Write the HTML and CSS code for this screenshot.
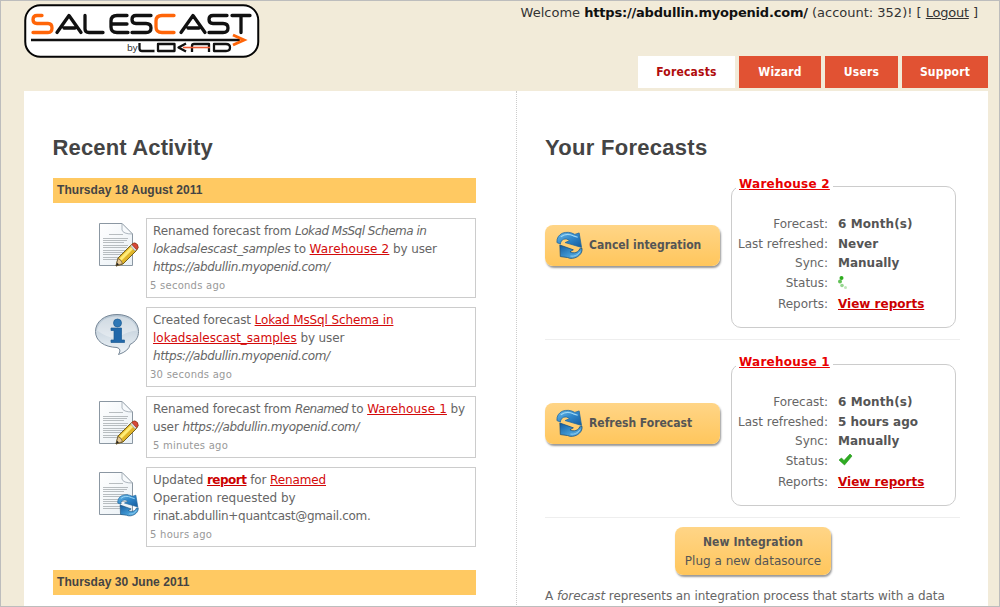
FILE: index.html
```html
<!DOCTYPE html>
<html lang="en">
<head>
<meta charset="utf-8">
<title>Salescast</title>
<link rel="stylesheet" href="styles.css">
</head>
<body>
<svg class="defs" width="0" height="0" aria-hidden="true">
  <defs>
    <linearGradient id="paper" x1="0" y1="0" x2="1" y2="1"><stop offset="0" stop-color="#fff"/><stop offset="1" stop-color="#e9f0f5"/></linearGradient>
    <linearGradient id="blue" x1="0" y1="0" x2="1" y2="1"><stop offset="0" stop-color="#6dbbe8"/><stop offset=".5" stop-color="#2f86c9"/><stop offset="1" stop-color="#155a9c"/></linearGradient>
    <linearGradient id="blue-low" x1="0" y1="0" x2="1" y2="1"><stop offset="0" stop-color="#155a9c"/><stop offset=".55" stop-color="#3d94d0"/><stop offset="1" stop-color="#6dbbe8"/></linearGradient>
    <linearGradient id="bubble" x1="0" y1="0" x2="0" y2="1"><stop offset="0" stop-color="#b3c3d1"/><stop offset="1" stop-color="#f0f5f9"/></linearGradient>
    <symbol id="page" viewBox="0 0 44 48">
      <path d="M5.500 2.500H28L38.500 13V44.500H5.500Z" fill="url(#paper)" stroke="#8b97a2"/>
      <path d="M28 2.500V9Q29 13 38.500 13Z" fill="#f7fafc" stroke="#9aa5ae" stroke-width=".8"/>
      <path d="M15 13.500H29M9 17.500H34M9 19.500H33M9 21.500H30M9 24.500H34M9 26.500H33M9 29.500H31M9 31.500H33M9 33.500H28M9 36.500H30M9 38.500H26" stroke="#b0b5b9" stroke-width=".9"/>
    </symbol>
    <symbol id="sync" viewBox="0 0 28 30">
      <path d="M1 12.500C0 3 11-1 19.500 4L24 2.500 26.500 17.500 9.500 12.500 14 10.500C10 7 5 9 4.500 14Z" fill="url(#blue)" stroke="#1f659c" stroke-width=".8"/>
      <path d="M27 18.500C28 26 18 31 12 28L4.500 27 4 15 18 20 14.500 22C18 24.500 24 22.500 24.500 19Z" fill="url(#blue-low)" stroke="#174f7d" stroke-width=".8"/>
      <path d="M5 6.500Q11 2 18 5.500L22.500 7" fill="none" stroke="#9ed8f5" stroke-width="1.200"/>
      <path d="M15 26.500Q21 27.500 25 22" fill="none" stroke="#8fcdf0"/>
    </symbol>
    <symbol id="pencil" viewBox="0 0 24 25">
      <path d="M1 24 3 16 16.500 2.500Q20-.5 22.500 3 24 6 21.500 8.500L8 22Z" fill="#e0b52a" stroke="#76601b"/>
      <path d="M5.500 17.500 18 5" stroke="#ffec78" stroke-width="3"/>
      <path d="M1 24 3 16.500Q6.500 18 7.500 21.500Z" fill="#e9cb98" stroke="#665337" stroke-width=".7"/>
      <path d="M1 24 2 20.800 4 22.500Z" fill="#222"/>
      <path d="M15.500 4 17 2.500 21.500 7.500 20 9Z" fill="#d8dcdf" stroke="#8c8f91" stroke-width=".5"/>
      <path d="M17 2.500Q20-.5 22.500 3 24 6 21.500 7.500Z" fill="#d94938" stroke="#9c3026" stroke-width=".7"/>
    </symbol>
  </defs>
</svg>
<div class="window">
  <header class="header">
    <svg class="logo" viewBox="0 0 236 54" role="img" aria-label="Salescast by Lokad">
      <rect x="1.250" y="1.250" width="233" height="51.500" rx="15" fill="#fff" stroke="#050505" stroke-width="2"/>
      <g fill="none" stroke="#111" stroke-width="3.300" stroke-linecap="round" stroke-linejoin="round">
        <path stroke="#ff6508" d="M18 11.500H13Q9 11.500 9 15.500T13 19.500H24Q28 19.500 28 24T24 28.500H9"/>
        <path d="M33 28.500 45 11.500 57 28.500M40 24H51M61 11.500V25Q61 28.500 65 28.500H79M103 11.500H93Q87 11.500 87 17V23Q87 28.500 93 28.500H104M87 20H103M127 11.500H112Q108 11.500 108 15.500T112 19.500H122Q127 19.500 127 24T122 28.500H108"/>
        <path stroke="#ff6508" d="M150 11.500H138Q132 11.500 132 17V23Q132 28.500 138 28.500H150"/>
        <path d="M157 28.500 169 11.500 181 28.500M164 24H175M203 11.500H189Q185 11.500 185 15.500T189 19.500H199Q204 19.500 204 24T199 28.500H185M208 11.500H226M217 11.500V28.500"/>
      </g>
      <path d="M7 36H216" stroke="#111" stroke-width="2.500"/>
      <path d="M209 31 220 36 209 41" fill="none" stroke="#ff6508" stroke-width="3"/>
      <text x="103" y="46.500" class="logo-by">by</text>
      <g fill="none" stroke="#111" stroke-width="2.300" stroke-linejoin="round">
        <path d="M115.500 39V44.500Q115.500 47 118 47H130.500M134 40H150.500V47H134ZM162 39.500 154.500 43.500 162 47.500M168 48V42Q168 40 170 40H185V48M190 40H202Q206 40 206 43.500T202 47H190Z"/>
        <path d="M159 43.500H186" stroke="#f25c35" stroke-width="1.600"/>
      </g>
    </svg>
    <div class="header-right">
      <p class="welcome">Welcome <strong>https://abdullin.myopenid.com/</strong> (account: 352)! [ <a href="#">Logout</a> ]</p>
      <nav class="tabs"><a class="tab tab-active" href="#">Forecasts</a><a class="tab tab-wizard" href="#">Wizard</a><a class="tab tab-users" href="#">Users</a><a class="tab tab-support" href="#">Support</a></nav>
    </div>
  </header>
  <main class="content">
    <section class="activity">
      <h1>Recent Activity</h1>
      <h2>Thursday 18 August 2011</h2>
      <div class="feed">
        <article class="event">
          <svg class="event-icon" viewBox="0 0 46 48"><use href="#page" width="44" height="48"/><use href="#pencil" x="21" y="21" width="24" height="25"/></svg>
          <div class="event-box"><p>Renamed forecast from <em class="source">Lokad MsSql Schema in</em><br><em class="sample">lokadsalescast_samples</em> to <a class="warehouse" href="#">Warehouse 2</a> by user<br><em>https://abdullin.myopenid.com/</em></p><time>5 seconds ago</time></div>
        </article>
        <article class="event">
          <svg class="event-icon" viewBox="0 0 46 48">
            <path d="M23 4.500C10 4.500 1.500 12 1.500 21.500 1.500 31 10 37 23 37.500Q28 39 24.500 44.500 35 41 36 34.500C42 31.500 44.500 27 44.500 21.500 44.500 12 36 4.500 23 4.500Z" fill="url(#bubble)" stroke="#778797"/>
            <path d="M3 20.500Q6 6.500 23 6.500T43 20.500Q33 21.500 26 26.500T3 20.500Z" fill="#fff" opacity=".35"/>
            <circle cx="23.500" cy="13" r="4" fill="#2d77b6" stroke="#1c5b94" stroke-width=".7"/>
            <path d="M17 18H27.500V30H30.500V32.500H17V30H20V20.500H17Z" fill="#2168aa" stroke="#1c5b94" stroke-width=".7"/>
          </svg>
          <div class="event-box"><p>Created forecast <a href="#">Lokad MsSql Schema in<br><span class="sample-link">lokadsalescast_samples</span></a> by user<br><em>https://abdullin.myopenid.com/</em></p><time>30 seconds ago</time></div>
        </article>
        <article class="event event-short">
          <svg class="event-icon" viewBox="0 0 46 48"><use href="#page" width="44" height="48"/><use href="#pencil" x="21" y="21" width="24" height="25"/></svg>
          <div class="event-box"><p>Renamed forecast from <em class="old-name">Renamed</em> to <a class="warehouse" href="#">Warehouse 1</a> by<br>user <em>https://abdullin.myopenid.com/</em></p><time class="time-indent">5 minutes ago</time></div>
        </article>
        <article class="event">
          <svg class="event-icon" viewBox="0 0 46 48"><use href="#page" width="44" height="48"/><use href="#sync" x="23" y="23" width="22" height="24"/></svg>
          <div class="event-box"><p>Updated <a class="strong" href="#">report</a> for <a href="#">Renamed</a><br><span class="operation">Operation requested by</span><br><span class="email">rinat.abdullin+quantcast@gmail.com.</span></p><time>5 hours ago</time></div>
        </article>
      </div>
      <h2>Thursday 30 June 2011</h2>
      <div class="feed feed-next"><div class="event-box"></div></div>
    </section>
    <section class="forecasts">
      <h1>Your Forecasts</h1>
      <article class="forecast">
        <button class="button action"><svg class="button-icon"><use href="#sync"/></svg><span>Cancel integration</span></button>
        <fieldset>
          <legend><a href="#">Warehouse 2</a></legend>
          <dl>
            <dt>Forecast:</dt><dd class="period">6 Month(s)</dd>
            <dt>Last refreshed:</dt><dd>Never</dd>
            <dt>Sync:</dt><dd>Manually</dd>
            <dt>Status:</dt><dd><svg class="status" viewBox="0 0 16 16"><g fill="#2eac1f"><circle cx="3.500" cy="3" r="2"/><circle cx="2" cy="6.500" r="2" opacity=".75"/><circle cx="4" cy="10.500" r="1.800" opacity=".5"/><circle cx="7.500" cy="12.500" r="1.500" opacity=".3"/></g></svg></dd>
            <dt>Reports:</dt><dd><a href="#">View reports</a></dd>
          </dl>
        </fieldset>
      </article>
      <article class="forecast">
        <button class="button action"><svg class="button-icon"><use href="#sync"/></svg><span>Refresh Forecast</span></button>
        <fieldset>
          <legend><a href="#">Warehouse 1</a></legend>
          <dl>
            <dt>Forecast:</dt><dd class="period">6 Month(s)</dd>
            <dt>Last refreshed:</dt><dd>5 hours ago</dd>
            <dt>Sync:</dt><dd>Manually</dd>
            <dt>Status:</dt><dd><svg class="status" viewBox="0 0 16 16"><path d="M1 7 3.500 5 6 7.500 12 1 14 3 6.500 12Z" fill="#2eac22" stroke="#239418" stroke-width=".6"/></svg></dd>
            <dt>Reports:</dt><dd><a href="#">View reports</a></dd>
          </dl>
        </fieldset>
      </article>
      <button class="button new-integration"><strong>New Integration</strong><span>Plug a new datasource</span></button>
      <p class="intro">A <em>forecast</em> represents an integration process that starts with a data</p>
    </section>
  </main>
</div>
</body>
</html>
```
FILE: styles.css
```css
* { box-sizing: border-box; }
body { margin: 0; font-family: Verdana, "DejaVu Sans", sans-serif; font-size: 12px; color: #666; }
.defs { display: block; position: absolute; }
.window { height: 607px; overflow: hidden; border: 1px solid #bdbdbd; background: #f2ebd9; padding: 0 11px 0 23px; }
.header { height: 90px; display: flex; justify-content: space-between; }
.logo { width: 236px; height: 54px; margin-top: 3px; }
.logo-by { font: 9.500px "Open Sans", sans-serif; fill: #222; }
.header-right { display: flex; flex-direction: column; align-items: flex-end; }
.welcome { margin: 4px 10px 0 0; font-size: 13px; letter-spacing: 0; line-height: 16px; color: #333; white-space: nowrap; }
.welcome strong { color: #111; letter-spacing: -.2px; }
.welcome a { color: #333; letter-spacing: -.25px; }
.tabs { margin-top: 35px; display: flex; gap: 4px; }
.tab { height: 32px; width: 97px; line-height: 33px; text-align: center; background: #e15233; color: #fff; font-family: "DejaVu Sans Condensed", "DejaVu Sans", sans-serif; font-stretch: condensed; letter-spacing: .2px; font-weight: bold; text-decoration: none; }
.tab-active { background: #fff; color: #b00c0c; }
.tab-wizard { width: 82px; }
.tab-users { width: 73px; }
.tab-support { width: 86px; }
.content { height: 530px; background: #fff; display: grid; grid-template-columns: 493px 1fr; }
.activity { padding: 0 40px 0 28.500px; border-right: 1px dotted #ccc; }
h1 { margin: 43px 0 17px; font: bold 22px/27px "Liberation Sans", Arial, sans-serif; letter-spacing: .15px; color: #444; }
h2 { margin: 0; height: 25px; padding-left: 4.500px; background: #ffc962; font: bold 12px/25px "Liberation Sans", Arial, sans-serif; letter-spacing: .05px; color: #444; }
.feed { padding: 15px 0 23px 41.500px; display: flex; flex-direction: column; gap: 9px; }
.event { display: flex; gap: 6px; height: 80px; }
.event-short { height: 62px; }
.event-icon { width: 46px; height: 48px; flex: none; margin-top: 2.500px; }
.event-box { flex: 1; min-width: 0; border: 1px solid #ccc; padding: 3px 0 0 6px; white-space: nowrap; }
.event-box p { margin: 0; line-height: 18px; letter-spacing: -.12px; }
.event-box em { letter-spacing: -.37px; }
.event-box .source { letter-spacing: -.5px; }
.event-box .sample { letter-spacing: -.3px; }
.event-box .old-name { letter-spacing: -.65px; }
.sample-link { letter-spacing: 0; }
.operation { letter-spacing: 0; }
.email { letter-spacing: -.3px; }
.event-box time { display: block; margin-left: -3px; font-size: 10px; letter-spacing: .25px; line-height: 19px; color: #999; }
.event-box .time-indent { margin-left: 0; }
.feed-next { padding-top: 11px; }
.feed-next .event-box { flex: none; height: 50px; margin-left: 52px; }
.event-box a { color: #d40a0a; }
.event-box .warehouse { letter-spacing: .15px; }
.event-box .strong { font-weight: bold; letter-spacing: -.5px; color: #c00; }
.forecasts { padding: 0 28px; }
.forecasts h1 { margin-bottom: 15px; letter-spacing: .28px; }
.forecast { height: 164px; margin-bottom: 14px; border-bottom: 1px solid #eee; display: flex; gap: 11px; align-items: flex-start; }
.button { border: 0; border-radius: 8px; background: linear-gradient(#ffd587, #ffc65c); box-shadow: 1px 2px 2px #999; font: inherit; color: #555; white-space: nowrap; }
.action { width: 175px; height: 41px; margin-top: 49px; padding: 0 0 2px 11px; display: flex; align-items: center; gap: 6px; font-family: "DejaVu Sans Condensed", "DejaVu Sans", sans-serif; font-stretch: condensed; font-weight: bold; }
.button-icon { width: 27px; height: 30px; flex: none; }
fieldset { margin: 0; width: 225px; height: 152px; padding: 17px 0 0 5px; border: 1px solid #ccc; border-radius: 10px; min-width: 0; }
legend { padding: 0 3px; height: 21px; line-height: 17px; font-weight: bold; letter-spacing: .25px; margin-left: -1px; }
legend a { color: #e80000; }
dl { margin: 0; display: grid; grid-template-columns: 91px 1fr; grid-template-rows: 20px 19px 20px 20px 22px; column-gap: 10px; align-items: center; white-space: nowrap; }
dt { text-align: right; }
dd { margin: 0; font-weight: bold; color: #555; }
.period { letter-spacing: .1px; }
dd a { color: #c00; }
.status { width: 16px; height: 16px; display: block; }
.new-integration { width: 156px; height: 48px; margin: -5px 0 0 130px; padding: 1px 0 0; display: flex; flex-direction: column; align-items: center; justify-content: center; line-height: 19px; }
.new-integration strong { font-family: "DejaVu Sans Condensed", "DejaVu Sans", sans-serif; font-stretch: condensed; letter-spacing: .1px; }
.intro { margin: 12px 0 0; line-height: 18px; letter-spacing: -.07px; white-space: nowrap; }
```
